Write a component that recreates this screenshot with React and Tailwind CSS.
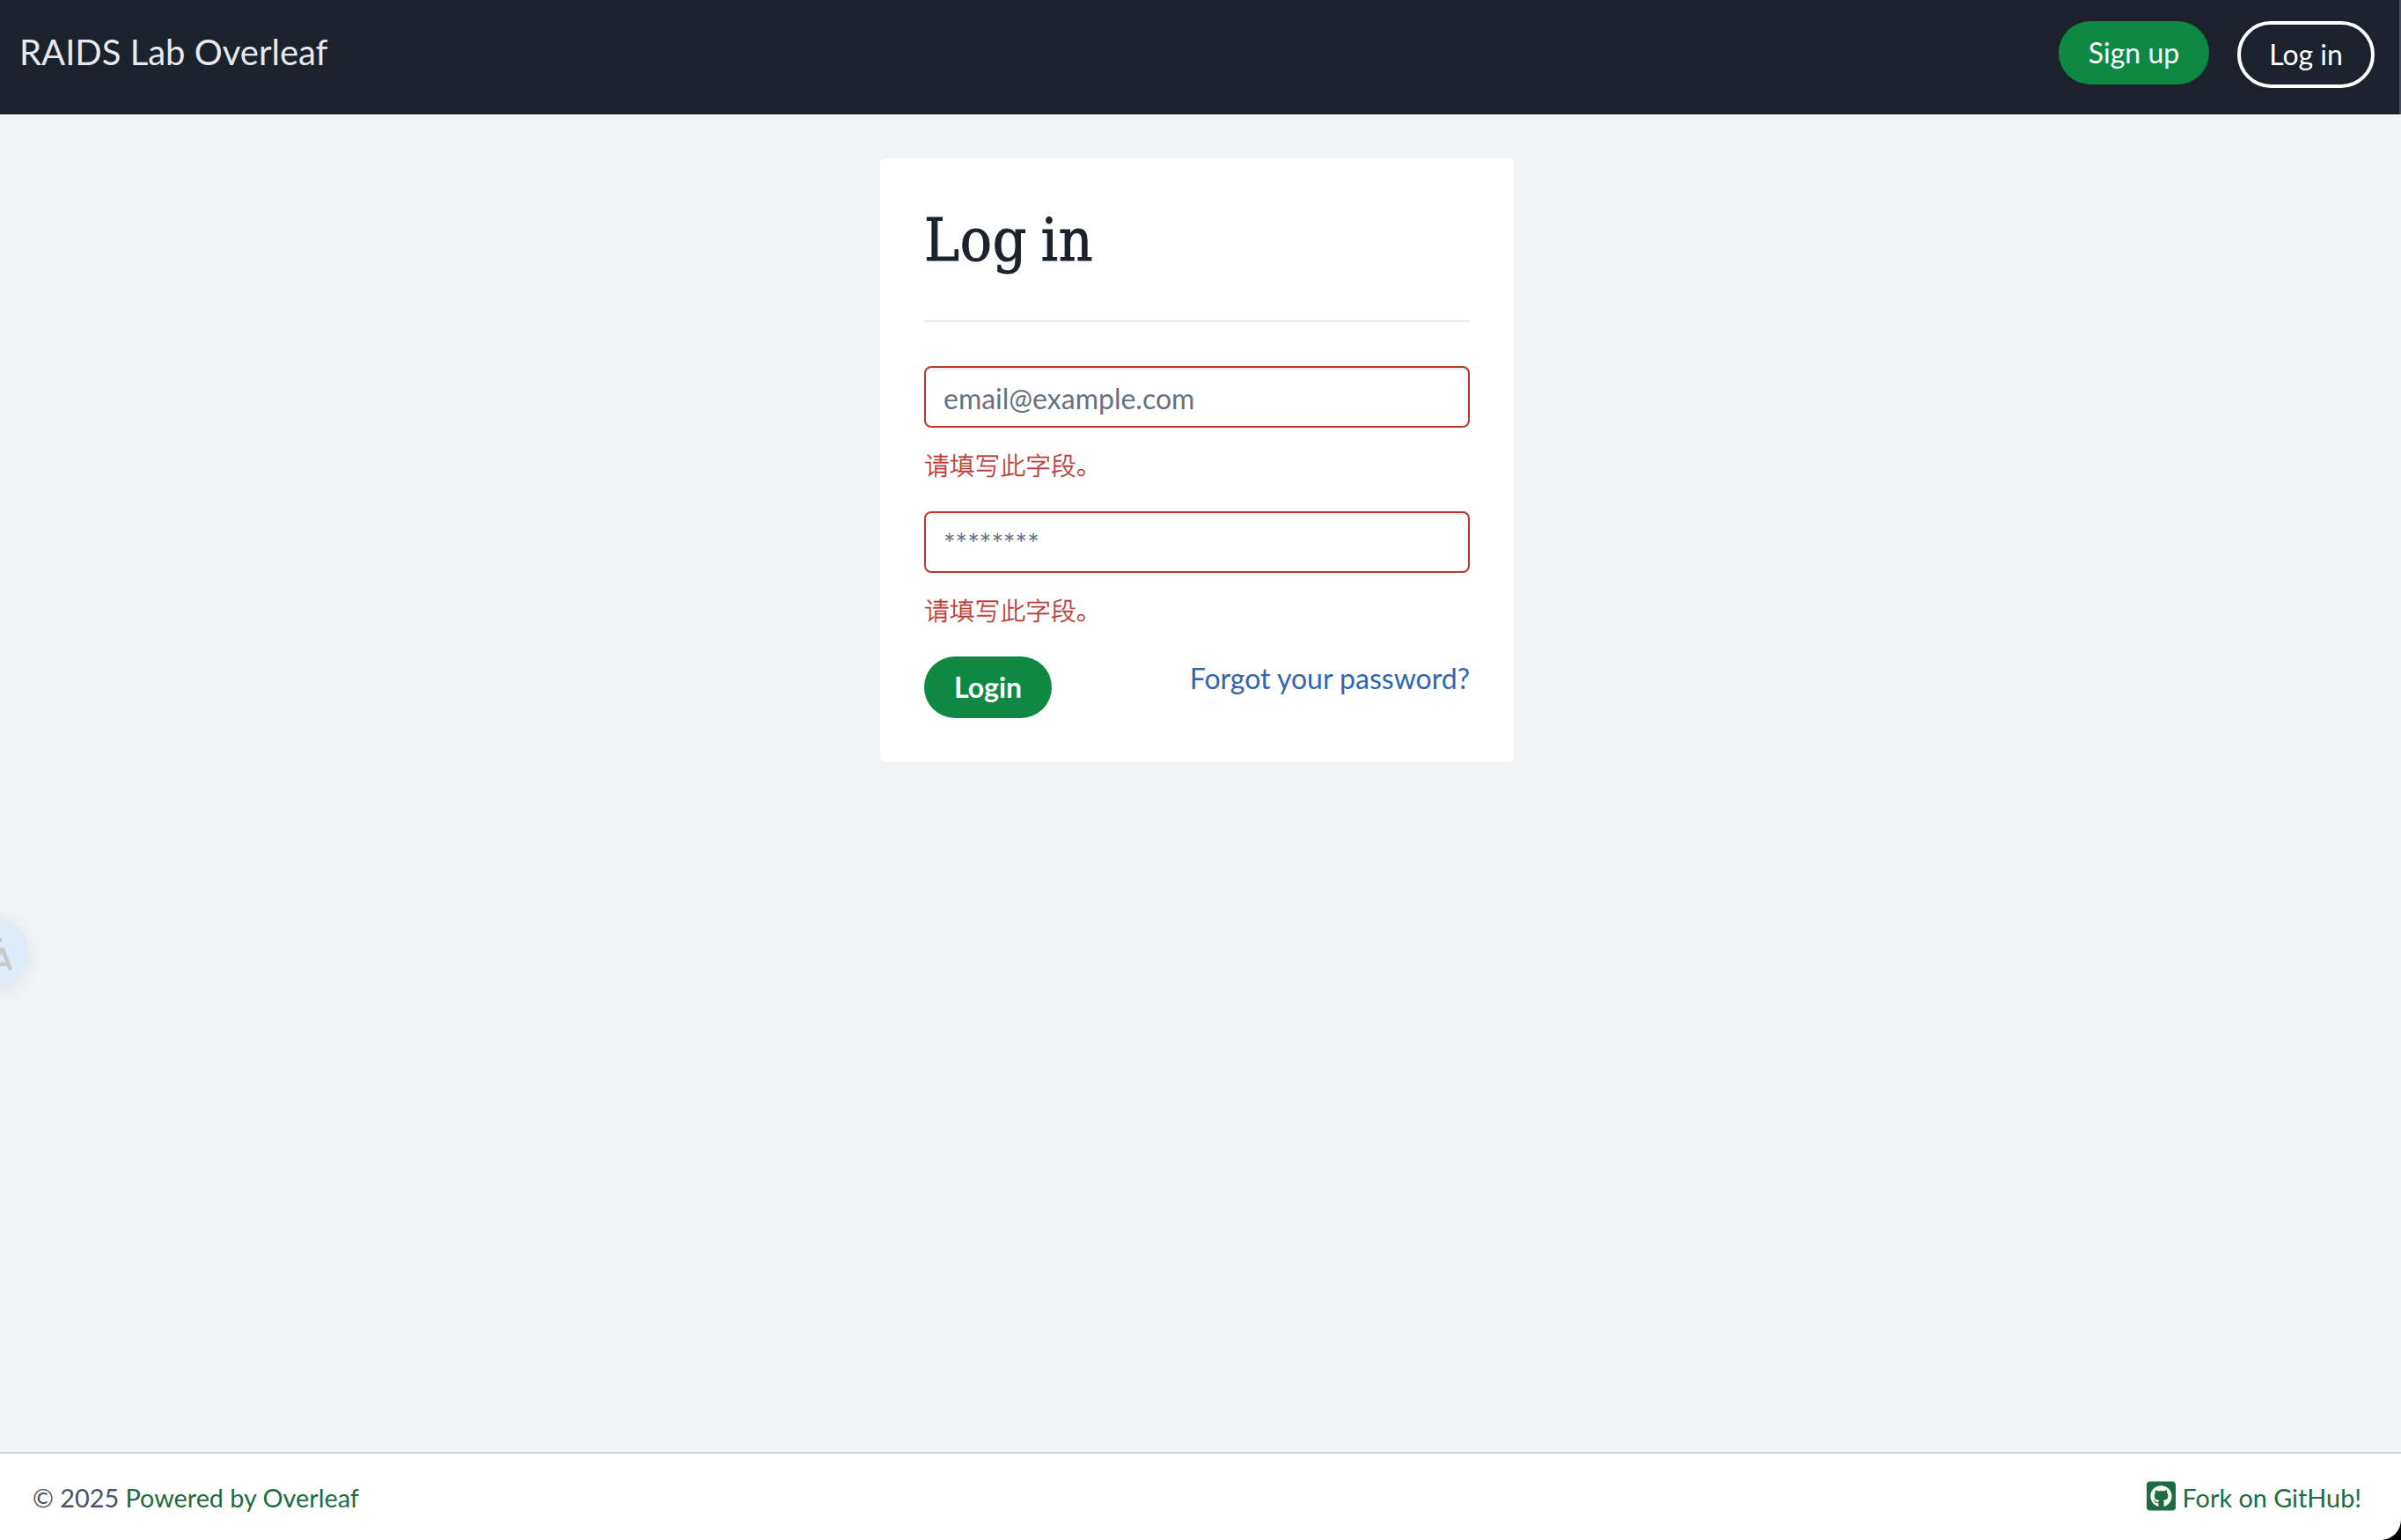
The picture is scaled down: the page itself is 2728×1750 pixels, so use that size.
import React from 'react';
import {FaGithubSquare} from 'react-icons/fa';

const REQUIRED_MESSAGE = "请填写此字段。";

function Navbar() {
    return (
        <nav className="flex h-[130px] items-start justify-between bg-[#1b222c] pt-6 pl-[22px] pr-[30px]">
            <a href="#" className="mt-2.5 text-[40px] leading-[50px] text-[#e7e9ee]">RAIDS Lab Overleaf</a>
            <div className="flex items-start gap-8">
                <a href="#" className="flex h-[72px] w-[171px] items-center justify-center rounded-full bg-[#0e8943] text-[32px] text-white">Sign up</a>
                <a href="#" className="flex h-[76px] w-[156px] items-center justify-center rounded-full border-4 border-white text-[32px] text-white">Log in</a>
            </div>
        </nav>
    )
}

function Field({type, placeholder}) {
    return (
        <div className="h-[165px]">
            <input
                type={type}
                placeholder={placeholder}
                className="block h-[70px] w-full rounded-lg border-2 border-[#b83a33] bg-white px-5 pt-0.5 text-[32px] text-[#1b222c] shadow-[inset_0_2px_2px_rgba(0,0,0,0.075)] outline-none placeholder:text-[#677283]"
            />
            <p className="mt-[18px] font-['Noto_Sans_CJK_SC',sans-serif] text-[28.8px] leading-[48px] font-light text-[#b83a33] [-webkit-text-stroke:0.4px_#b83a33]">{REQUIRED_MESSAGE}</p>
        </div>
    )
}

function LoginCard() {
    return (
        <main className="mt-[50px] ml-[1000px] h-[686px] w-[720px] rounded-md bg-white px-[50px]">
            <h1 className="flex h-[184px] items-center pt-0.5 font-['DejaVu_Serif_Condensed','DejaVu_Serif',serif] text-[67px] tracking-[0.7px] [word-spacing:-4px] text-[#1b222c] [-webkit-text-stroke:1px_#1b222c]">Log in</h1>
            <hr className="border-t-2 border-[#e7e9ee]"/>
            <form className="pt-[50px]" onSubmit={(e) => e.preventDefault()}>
                <Field type="email" placeholder="email@example.com"/>
                <Field type="password" placeholder="********"/>
                <div className="flex items-start justify-between">
                    <button type="submit" className="h-[70px] w-[145px] rounded-full bg-[#0e8943] text-[32px] font-bold text-white">Login</button>
                    <a href="#" className="text-[32px] leading-[50px] text-[#3265b2]">Forgot your password?</a>
                </div>
            </form>
        </main>
    )
}

function Footer() {
    return (
        <footer className="mt-auto flex h-[100px] items-center justify-between border-t-2 border-[#d0d5e0] bg-white pt-[3px] pl-[37px] pr-[45px] text-[28.8px]">
            <p className="text-[#495365]">© 2025 <a href="#" className="text-[#1e6b41]">Powered by Overleaf</a></p>
            <a href="#" className="flex items-center gap-2 text-[#1e6b41]">
                <FaGithubSquare className="mb-1.5 h-[38px] w-[33px]"/>
                Fork on GitHub!
            </a>
        </footer>
    )
}

// half hidden behind the left edge of the window
function TranslateButton() {
    return (
        <button className="absolute top-[1042px] left-[-48px] size-20 rounded-full bg-[#deebf8] shadow-[0_4px_24px_rgba(0,0,0,0.08)]">
            <svg viewBox="0 0 80 80" className="size-20" fill="none" stroke="#c8c9ca" strokeWidth="4.5">
                <path d="M28 26H50M36 60L49.5 37H51L60 60M44 53.5H57"/>
            </svg>
        </button>
    )
}

export default function App() {
    return (
        <div className="relative flex h-[1750px] w-[2728px] flex-col overflow-hidden bg-[#f3f4f6] font-['Lato','Noto_Sans_CJK_SC',sans-serif]">
            <Navbar/>
            <LoginCard/>
            <Footer/>
            <TranslateButton/>
            <div className="absolute top-0 right-0 h-[130px] w-0.5 bg-[#4a5059]"/>
            <svg className="absolute right-0 bottom-0 size-6" viewBox="0 0 24 24">
                <path d="M24 0V24H0C14 24 24 14 24 0Z" fill="#000"/>
            </svg>
        </div>
    )
}
